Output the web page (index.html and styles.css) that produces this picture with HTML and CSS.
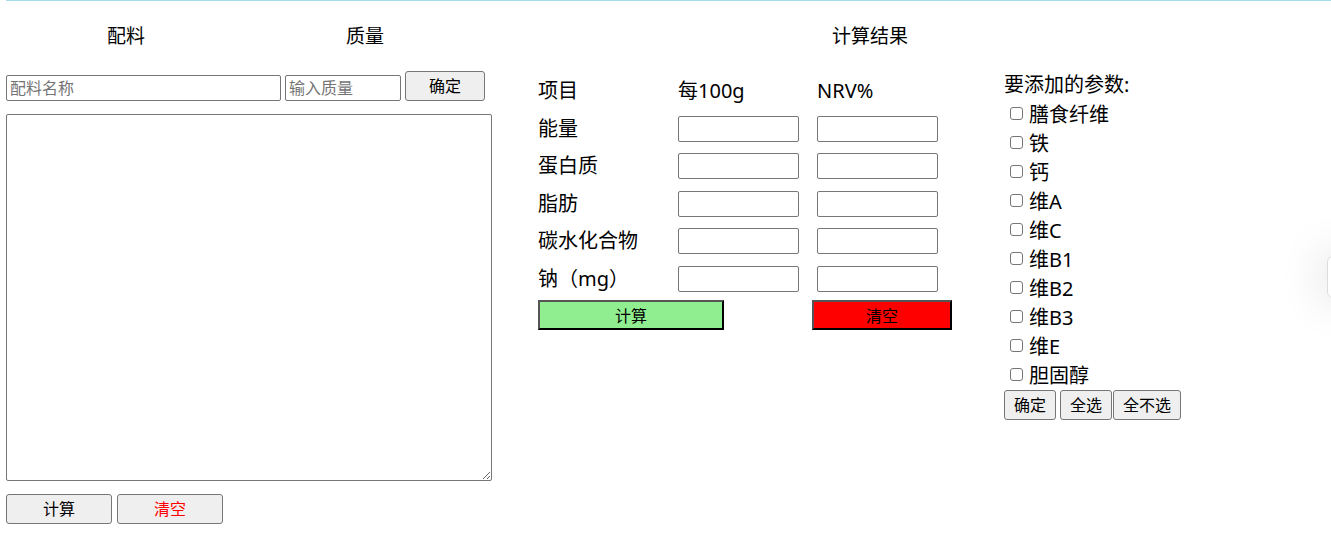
FILE: index.html
```html
<!DOCTYPE html>
<html lang="zh-CN">
<head>
    <meta charset="UTF-8">
    <title>营养成分计算</title>
    <link rel="stylesheet" href="styles.css">
</head>
<body>
    <div class="topline"></div>

    <div class="heads">
        <div class="head h-name">配料</div>
        <div class="head h-mass">质量</div>
        <div class="head h-result">计算结果</div>
    </div>

    <div class="main">
        <!-- 配料 -->
        <div class="left">
            <div class="add-row">
                <input type="text" class="in-name" placeholder="配料名称">
                <input type="text" class="in-mass" placeholder="输入质量">
                <button class="btn btn-ok">确定</button>
            </div>
            <textarea class="list"></textarea>
            <div class="left-btns">
                <button class="btn btn-wide">计算</button>
                <button class="btn btn-wide btn-redtext">清空</button>
            </div>
        </div>

        <!-- 计算结果 -->
        <div class="result">
            <div class="grid">
                <div class="cell">项目</div>
                <div class="cell">每100g</div>
                <div class="cell">NRV%</div>

                <div class="cell">能量</div>
                <input type="text" class="num">
                <input type="text" class="num">

                <div class="cell">蛋白质</div>
                <input type="text" class="num">
                <input type="text" class="num">

                <div class="cell">脂肪</div>
                <input type="text" class="num">
                <input type="text" class="num">

                <div class="cell">碳水化合物</div>
                <input type="text" class="num">
                <input type="text" class="num">

                <div class="cell">钠（mg）</div>
                <input type="text" class="num">
                <input type="text" class="num">
            </div>
            <div class="result-btns">
                <button class="calc">计算</button>
                <button class="clear">清空</button>
            </div>
        </div>

        <!-- 参数 -->
        <div class="params">
            <div class="params-title">要添加的参数:</div>
            <label class="opt"><input type="checkbox">膳食纤维</label>
            <label class="opt"><input type="checkbox">铁</label>
            <label class="opt"><input type="checkbox">钙</label>
            <label class="opt"><input type="checkbox">维A</label>
            <label class="opt"><input type="checkbox">维C</label>
            <label class="opt"><input type="checkbox">维B1</label>
            <label class="opt"><input type="checkbox">维B2</label>
            <label class="opt"><input type="checkbox">维B3</label>
            <label class="opt"><input type="checkbox">维E</label>
            <label class="opt"><input type="checkbox">胆固醇</label>
            <div class="param-btns">
                <button class="btn btn-sm">确定</button>
                <button class="btn btn-sm btn-gap">全选</button>
                <button class="btn btn-sm btn-tight">全不选</button>
            </div>
        </div>
    </div>

    <div class="float-tab"></div>
</body>
</html>
```

FILE: styles.css
```css
body {
    margin: 0;
    padding: 0 0 0 6px;
    font-family: "Noto Sans", "Noto Sans CJK SC", sans-serif;
    color: #000;
    background: #fff;
    overflow: hidden;
}
.topline {
    height: 1px;
    background: #a8dce8;
}
.heads {
    display: flex;
    height: 70px;
    align-items: center;
    font-size: 19px;
    line-height: 24px;
}
.head {
    text-align: center;
}
.h-name {
    width: 240px;
}
.h-mass {
    width: 238px;
}
.h-result {
    width: 772px;
}
.main {
    display: flex;
    align-items: flex-start;
}
input, textarea, button {
    font-family: "Noto Sans", "Noto Sans CJK SC", sans-serif;
}
.btn {
    background: #efefef;
    border: 1px solid #767676;
    border-radius: 3px;
    font-size: 16px;
    line-height: 20px;
    color: #000;
    padding: 0;
}
.left {
    width: 486px;
}
.add-row {
    display: flex;
    align-items: flex-end;
    gap: 4px;
}
.in-name, .in-mass {
    box-sizing: border-box;
    height: 26px;
    border: 1px solid #767676;
    border-radius: 2px;
    padding: 0 3px;
    font-size: 16px;
}
.in-name {
    width: 275px;
}
.in-mass {
    width: 116px;
}
::placeholder {
    color: #757575;
}
.btn-ok {
    width: 80px;
    height: 30px;
}
.list {
    display: block;
    box-sizing: border-box;
    width: 486px;
    height: 367px;
    margin-top: 13px;
    border: 1px solid #767676;
    border-radius: 2px;
    resize: both;
}
.left-btns {
    display: flex;
    gap: 5px;
    margin-top: 13px;
}
.btn-wide {
    width: 106px;
    height: 30px;
}
.btn-redtext {
    color: #ff0000;
}
.result {
    width: 414px;
    margin-left: 46px;
    margin-top: 7px;
}
.grid {
    display: grid;
    grid-template-columns: 140px 139px 135px;
    grid-auto-rows: 26px;
    row-gap: 11.5px;
    align-items: center;
}
.cell {
    font-size: 20px;
    line-height: 26px;
}
.num {
    box-sizing: border-box;
    width: 121px;
    height: 26px;
    border: 1px solid #767676;
    border-radius: 2px;
}
.result-btns {
    display: flex;
    justify-content: space-between;
    margin-top: 8px;
}
.calc, .clear {
    height: 30px;
    border: 2px solid;
    border-color: #555 #000 #000 #555;
    font-size: 16px;
    color: #000;
    padding: 0;
}
.calc {
    width: 186px;
    background: #90ee90;
}
.clear {
    width: 140px;
    background: #ff0000;
}
.params {
    margin-left: 52px;
    margin-top: -1px;
    font-size: 20px;
}
.params-title {
    line-height: 29px;
}
.opt {
    display: flex;
    align-items: center;
    height: 29px;
}
.opt input {
    appearance: none;
    box-sizing: border-box;
    width: 13px;
    height: 13px;
    margin: 0 6px;
    border: 1px solid #767676;
    border-radius: 3px;
    background: #fff;
}
.param-btns {
    display: flex;
    margin-top: 1px;
}
.btn-sm {
    height: 30px;
    padding: 0 9px;
}
.btn-gap {
    margin-left: 4px;
}
.btn-tight {
    margin-left: 1px;
}
.float-tab {
    position: fixed;
    top: 256px;
    right: -22px;
    width: 24px;
    height: 40px;
    background: #fff;
    border: 1px solid #ddd;
    border-radius: 6px;
    box-shadow: 0 0 40px 10px rgba(0, 0, 0, 0.08);
}
```
